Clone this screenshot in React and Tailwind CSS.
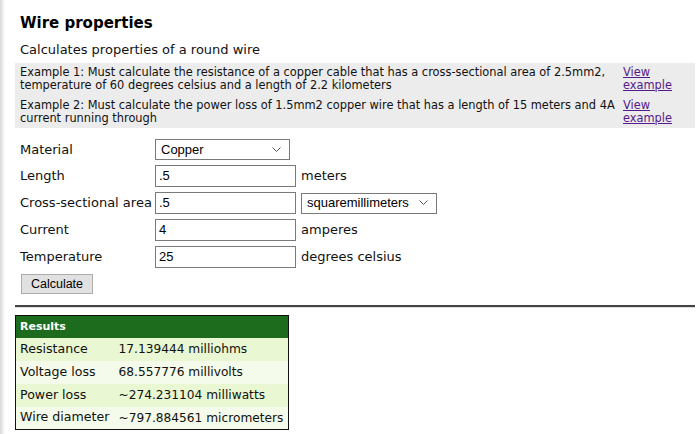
import React from 'react';

const examples = [
  'Example 1: Must calculate the resistance of a copper cable that has a cross-sectional area of 2.5mm2, temperature of 60 degrees celsius and a length of 2.2 kilometers',
  'Example 2: Must calculate the power loss of 1.5mm2 copper wire that has a length of 15 meters and 4A current running through',
];

const results = [
  ['Resistance', '17.139444 milliohms'],
  ['Voltage loss', '68.557776 millivolts'],
  ['Power loss', '~274.231104 milliwatts'],
  ['Wire diameter', '~797.884561 micrometers'],
];

const ctrlFont = { fontFamily: '"Liberation Sans", Arial, sans-serif' };

const Chevron = () => (
  <svg width="9" height="6" viewBox="0 0 9 6" className="ml-auto shrink-0">
    <path d="M0.5 0.5 L4.5 4.5 L8.5 0.5" fill="none" stroke="#555" strokeWidth="1" />
  </svg>
);

const Select = ({ value, width }) => (
  <div className={`flex items-center h-[21px] border border-[#7a7a7a] bg-white pl-[5px] pr-[8px] text-[13px] text-black ${width}`} style={ctrlFont}>
    <span className="whitespace-nowrap">{value}</span>
    <Chevron />
  </div>
);

const Input = ({ value }) => (
  <div className="flex items-center h-[22px] w-[141px] border border-[#7a7a7a] bg-white pl-[3px] text-[13px] text-black" style={ctrlFont}>
    {value}
  </div>
);

export default function App() {
  return (
    <div className="flex min-h-[434px] bg-white text-[#111]" style={{ fontFamily: '"DejaVu Sans", Verdana, sans-serif' }}>
      <div className="w-[5px] shrink-0 bg-gradient-to-r from-[#d8d8d8] to-white" />
      <div className="flex-1 pl-[10px] pr-[5px]">
        <h1 className="pl-[5px] pt-[14px] text-[15px] font-bold leading-[18px] text-black">Wire properties</h1>
        <p className="pl-[5px] mt-[10px] text-[13px] leading-[16px]">Calculates properties of a round wire</p>
        <div className="mt-[5px] bg-[#ececec] px-[5px] py-[3px] text-[11.4px] leading-[13px]">
          {examples.map((e, i) => (
            <div key={e} className={`flex ${i > 0 ? 'mt-[7px]' : ''}`}>
              <div className="w-[603px] shrink-0 pr-[4px]">{e}</div>
              <a href="#" className="text-[#551a8b] underline w-[60px]">View example</a>
            </div>
          ))}
        </div>
        <div className="mt-[11px] pl-[5px] grid grid-cols-[135px_auto] gap-y-[5px] text-[13px] items-center">
          <span>Material</span>
          <Select value="Copper" width="w-[135px]" />
          <span>Length</span>
          <div className="flex items-center gap-[5px]"><Input value=".5" /><span>meters</span></div>
          <span className="whitespace-nowrap">Cross-sectional area</span>
          <div className="flex items-center gap-[5px]"><Input value=".5" /><Select value="squaremillimeters" width="w-[136px]" /></div>
          <span>Current</span>
          <div className="flex items-center gap-[5px]"><Input value="4" /><span>amperes</span></div>
          <span>Temperature</span>
          <div className="flex items-center gap-[5px]"><Input value="25" /><span>degrees celsius</span></div>
        </div>
        <button className="ml-[6px] mt-[6px] h-[20px] w-[72px] border border-[#adadad] bg-[#e1e1e1] text-[12.5px] text-black" style={ctrlFont}>Calculate</button>
        <div className="mt-[10px] h-[3px] border-t-2 border-[#444] border-b border-b-[#ddd]" />
        <table className="mt-[7px] w-[274px] table-fixed border border-[#111] border-collapse text-[13px]">
          <colgroup>
            <col className="w-[99px]" />
            <col />
          </colgroup>
          <thead>
            <tr className="bg-[#1d6b1d]">
              <th className="h-[22px] pl-[4px] text-left text-[11px] font-bold text-white">Results</th>
              <th />
            </tr>
          </thead>
          <tbody>
            {results.map(([k, v], i) => (
              <tr key={k} className={i % 2 === 0 ? 'bg-[#e9f8d2]' : 'bg-[#f4fbea]'}>
                <td className="h-[23px] pl-[4px] whitespace-nowrap text-[12.6px]">{k}</td>
                <td className="whitespace-nowrap pl-[4px] text-[12.2px]">{v}</td>
              </tr>
            ))}
          </tbody>
        </table>
      </div>
    </div>
  );
}
